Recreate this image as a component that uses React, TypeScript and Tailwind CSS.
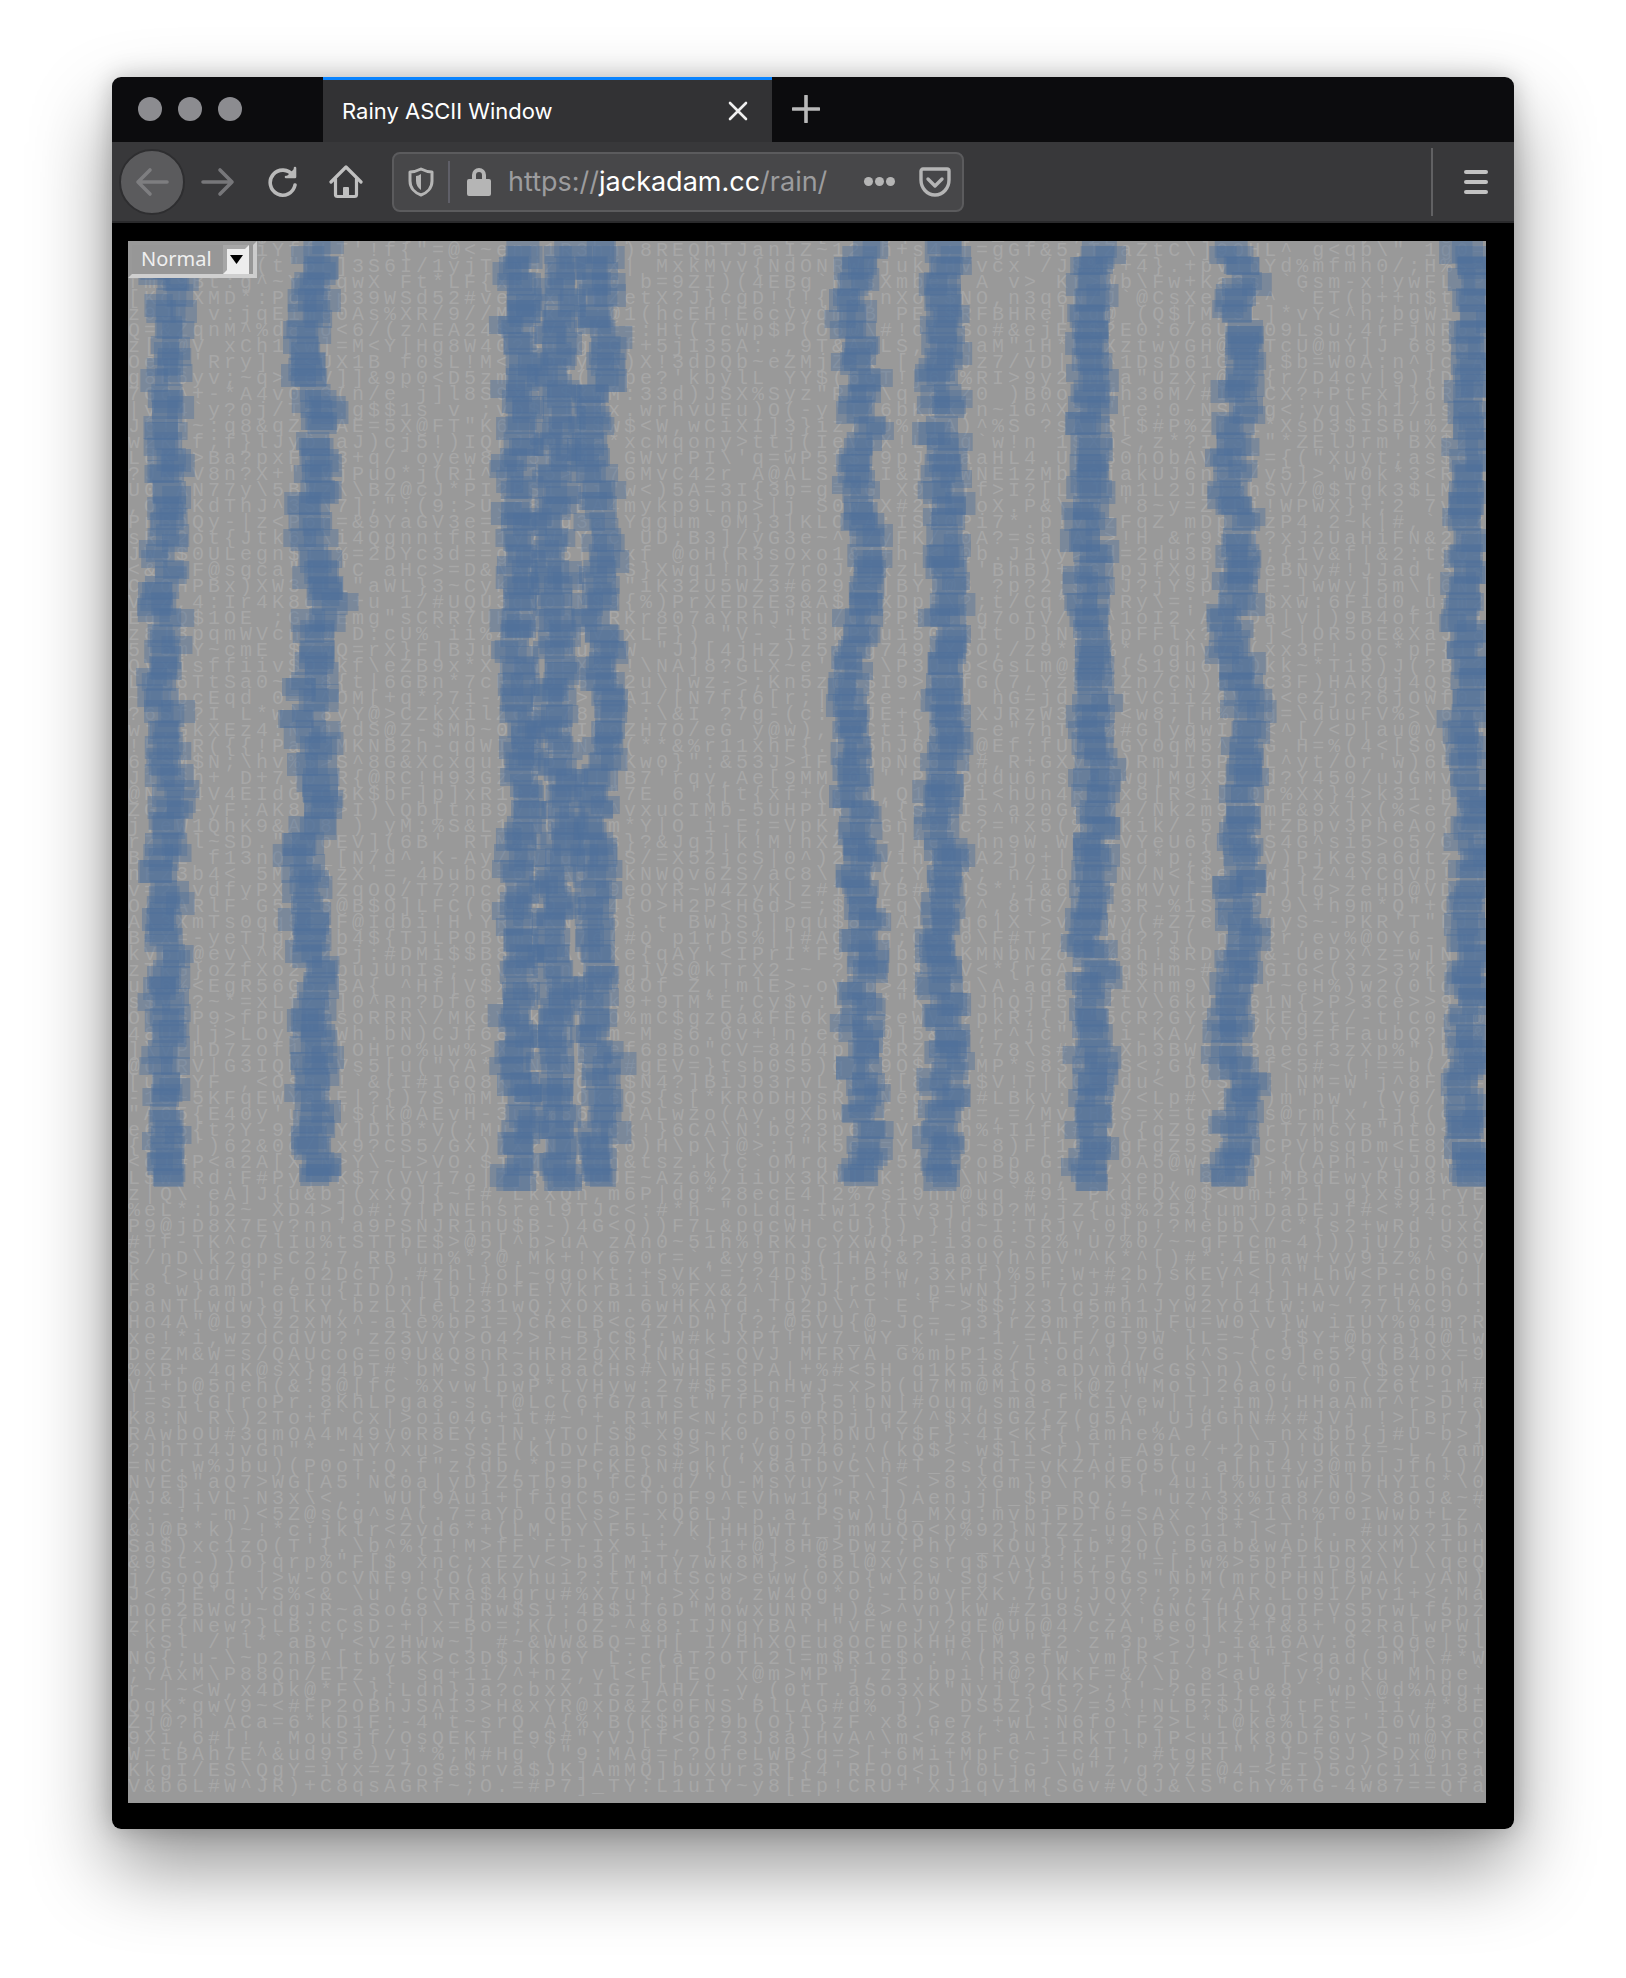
import React from "react";

// left half: columns 0-41, right half: columns 42-84
const ROWS: [string, string?][] = [
  ["a$R:7kq^iYffLT'!f{\"=@<~enn1R3hn)8REQhTJanIe", "Z~12=h+s4;[=gGf&5.TZaZtC\\]9QHL^ g<qb\\\" 1g0="],
  ["Ks9#vQ2l(t\"6L]3S6I/1yjT*NHzI>=X| MxkMvv{NdO", "ONRW(juk(HVvcx /J$%s+4}.+pv1bYd%mfmh0/;H%s8"],
  ["fm&9Bt:g^~YxQqwX`Ft*LF{xRbdr+d0 b=9ZI)(4EBWg", "g`NIsXmbe( A v> Kr>Wb\\Fw+Ka3s `Gsm-x!ywFL.P7"],
  ["[KcLXMD*:Po7#p39WSd52#ve>2xHUHZetX?J}cgD!{", "!{Y9jnXo~$NO,n3q6N/J`@CsXeT Z^ `ET(b++n$tU<"],
  ["z9JL v:jqEime0As%XR/9//My2kz6;@1(hcEH!E6cyd", "ydm B PE)$RFBHRe]Kg@ (Q$[MPsL]*vY<^h;bgWi iV"],
  ["Q=&ZqnM^%d8=U<6/(z^EA24$6qV^aK==:Ht(TcWp$PF", "(O6@\\#!o1 So#&ejE0$?E0:6/6U:.09LsU;4rFjNR69"],
  ["z[o@V xCh1Kw]=M<Y|Hg8W40?3u>gsGf+5jI35A:.,", "9T&A0LS,JGnaM\"1H*H6XztwyGH@;ZTcU@mY]J 685G1"],
  ["OeqL'Rry] Z<UX1B f0sL!M<Jt0qyzA)X!3dDQb~e", "MjZ>x [ 7hJz7/vD|p]^1DsD61G]F.$b=W0A:n^]c*A"],
  ["g8R6yv;~q>?eV]]&9p0<D5zm[&UJ(?jpe?'kbylL ", "Y$(6GT!}6Z%RI>9y2 MLa\"UzXr@7?{r/D4cv|9){D"],
  ["7G6^+-*A4v0u3(n/e`j]l8S9xc1$xwM:33d)JSX", "z\"Rup\\q 8 Z0 )B0o'1Mh36M/#I8.CX?+PtFx]}6"],
  ["|y 4`y?0j/Ta5.g$$1s v ;vp$T1RKx.wrhvUEu)O", "-y'T/6bK@X;n~iG^X>r\"re:0-NSb~g<;yq\\Sh1/1"],
  ["J6!H~:q8&qZ(=AE=5X@FT\"K6I]kn$$w$<W,wCiXI]", "}iz7fU%!]A)^%S ?sAIR[$#P%Zr?i*XsD3$ISBu%Z"],
  ["w2Krf;f}lJyb!aJ)cj5!)IQrJ803$a*xcMqony>t", "(IeV6X!L6^g`w!n 1SXn<,z*?IP3'\"*ZElJrm'BX$Z"],
  ["LdK\">Ba?pxFgj3+q/`oyew8()5KzMz GWvrPI\\'q=w", "P5f$[9pJ1naaHL4.UL.80nObAVdVt={(\"XUyt;as$G"],
  ["?JK7V8n?X+\"LVjPuO*j(Ri^Uq35>Fu76MvC42r A", "LS}TLI&i1{WNE1zMb$QjakUJ6nC6/y5]>'W0k*3<R"],
  ["U0 AN77y\\5BWz\\\\BZ@cJ*PI?PS1 ui\"w<)5A=3I{3", "=g=XG X9[0Tf>I?[LuJLm1L2JD}%hSV/@$Tgk3$L"],
  [",OB&KdThJ^3S\\7];\":(9:>UJq8YAPA4mykp9Lnp>|j", " S0W?X#2wH oX.P&\\HW`'8~y=ZxDi!WPWX}+;2 7v]"],
  ["PnBbQy-|z<P6r=&9YaGV3e=1QcJg3a-Yggum`0M}", "KLOcA:IS80Pi7*.p!vQzFqZ mDpitzP4.2~k|#,`f3"],
  ["sR#2ot{Jtk6J\\i4QgnntfRI1y7WLYZC UD;B3]/y", "e~^F/yFK/50A?=sa A >!H &r9Sv]?xJ2UaHiFN&2"],
  ["JW3$0ULegn$I[%=2DYc3d==gM8w5T]txf @oH(R3", "xo1&4+h~<f0b.J1yy>9d=2du3B3ix;{1V&f|&2:t$Q"],
  ["<&\\=F@sgca\"4?\"C aHc>=D&NA6YL>L;S}Xwq1!n|z", "r0J^jxzLK8['BhB)+0G7pJfXgjT1#eBNy#!JJad,3I<"],
  ["CyQHPBx)XW37Ll\"aWL}3~CyK1D9LH6:\"iK32U5WZ", "629y<|BYJ@3 ?p?2;$8NJ?jYspyP-F-]wWy]5m\\[6N"],
  ["VFZ,4:Ir4K8d<~+u 1/#UQU3gVoUM$9{%)PrXEDZE", "&A$=YXDpF\\?;t/Cq*V1(Ry\\=:-pqk$Xw:6Fid0,u#m2"],
  ["Eq=Q$1OE ;GpLEmg\"sCRR7UH8Vah*zRKr807aYRh", "Ru/U/?P30c!g7oIV/Hz^1oI2'A)\\Da|v|)9B4of1|D"],
  ["z8]3pqmWVcnz@ D:cU%`ii%4mT$qPVxxLF}) \"", "t3kPXui50CKIt D}N8g}pFFlx?Nk:]<|OR5oE&XaJ"],
  ["5T6mY~cmE $ZwQ=rX}F]BJu\"Yr3Mu&UW \"J)[4j", "z5&Jg749yXSO;/z9*t~%*,oqhVvs(xx3F!.Qc*pF"],
  ["QVxisffiiv$Oskf\\eZB9x*X[RNgEX&L!\\NA]8?GLX", "e'wZ \\P3UTb<GsLm@Zap{S19u6EGQkk~*T15)J(?Bz"],
  ["LOc6TtSa0~E$8{t|6GBn*7cRVg0kBcG2u\\|wz->;", "5z@s$I9>30fG(7,Yz9KZZn/CN)a9Tc3F)HAKgj4Q"],
  ["~!UbcEqd 0=z^OM[+q*?7i-^N7k4>7~A1/[N7f{6[", ";|qN2e-^dTd hG=jd!5TtVCiiz6V1p<eZjc?6jOWf0"],
  ["?6Sf?I L*w)J8yY@>CZkXilZ6$r78jZ`:\\&I ?7g", "c:=9JE+cB5eXJRzW3ZXZ<w8;[H%YLg=\\duuFV%>\\6"],
  ["wj.GkXEz4:N1qrdS@Z-$Mb~0qVm0I@oZH7O/eG ", "),^yCti}6Qr~e\"7hT8<%#G]ygwI8j<^[/<D|au@vr"],
  ["!FkdR({{!PaK?MKNB2h-qdWI%8qyN$2(**&%r11xhF", "{.[b5hJ6VTi@Ef:fUU'[GY0qM5^\"?G.H=%(4<[S0"],
  ["6XSM$N;\\hv%$>S^8G&XCxqu1nVp7 \"*Kw0}\":&5", "1F6BppNc61}#,R+GXyAR)RmJI5P2nL^yt/Or'w)6"],
  ["J1<$h+ D+7Jp.R{@RC!H93Gz<7uPU[]B7'rqv,A", "MM'0j''P58Dddu6rsIq0wg|MgX51]d?Y450/uJGM"],
  ["@N T4V4EIdG~CBK$bF]p]xR1e8n)ha\"7E 6'{", "+(gKu,Q1dzfi<hUn4R9]xG[R<iJ?0r%Xx}4>k31"],
  ["ZG/j-yF:AK8n%>I)\\Qb[tnB9VMmR w^vxuCIMb-5", "PIRMx'{S75Is^a20G8Zv4/Nk2m9H2mF&9x]X(%<e7"],
  ["j.eW1QhK9&AD8 ) yM:%S&L1SN0Tl'm*Y|O i-E", "pK,Y7Gn;9Zc?=\"x5(%Xikik/.5!<#+ZBpv3PheAo"],
  ["rZu\"l~SD.\"xvoEV](6B' RTM%u'TVr3}?&Jqj|", "hXZu6-]1e#.hn9W.WVq#VYeU6{P69S4G^si5>o5/G"],
  ["B/ML f13nQ13_[N/d^.K-Ay/zwDqMp]S/=X52jcS|", "^)2jgVihX4KA2jo+|T~usd*p;3-KNV)PjKeSa6dtz"],
  ["nFz3b4< 5MqGAzX'=,4Dubo=6BYA5L\"kNWQv6ZS/a", "8\\,JW(;Y6dX; n/ioHU-N/N<{$e/Iwj}Z^4YCqVp"],
  ["v=2 vdfyPX[qjZqOQ/T7?nco5QJ3129eOYR~W4Zy", "z#1r67B#KR!S*;j&6K5Z6MVv[=2zsh)lg>zeHD@VD"],
  ["O^gARlF`G53<3@B$O]LFC(6BU0Qio>4{O>H2P", "=;$8<Eq\\8h/^,8TG/HN13R-%1S7AP;9\\+h9m*Q\"+Q6"],
  ["A\\3XmTs0qq5cZF@Idbi!H'YRSpKNZ]6s.t BW}S}|", "qu$8ndA1E2q6|X`>v3XWy(#Z7eAVcuyS~-PKR'T\"L"],
  ["B#X=-yeTjg&><b4${TJLPOB0m$2L7e(#Q`p1rDS%", "#AG#Yq;Q3g0\\F#Tr;8Xbd??J( n2M2r;ev%@OY6-'m"],
  ["kV6m@ev\\^KFiZPj:#DMi$$B8&s6AUNXe{qAY'<I", "*F91x|b3VYKMNbNZo9I%3h!$RD0T-&-UeDx^z=w]N"],
  ["zTkG}oZfXo2#1puJUnIs;-Gv0e8nJuoqjVS@kTrX2", "~ ?Mn(D$2eV<*{rGAEV2q$Hm~#O8SGIG<(3z>3?k7("],
  ["uK6%<EgR56G5ZBA{ ^Hf|V$xq68k9VV&Of Z,!mlE>", "-oVZb>4Z\"3q\\A.aq8c 5iXnm9\\LOPr~eH%)w2(0"],
  ["s$v1?~*=xLfZ5]0^Rn?Df6:=T71YZXk9+9TM*E;Cy$", "V:LS0*\"Kf$tJhQjE59<ztv\\6kU1161N{>P>3Ce>>9"],
  ["OuuGP9>fPUjF2soRRR\\/MKcV0kAVNlO%mC$gzQa", "6k4Nk>eWV0?pkR;{JW\"5CR?GY2BVSkEqZt/-t!C0"],
  ["48Ug|j>LOy$\"(Wh.bN)CJf68vGKH^fm~M s6.0v+", ";e8t\"@]5&W>;r^jc\"MS i-KA/7XR/YY9=fFaubQ?R"],
  ["]\\VPhD7zof1Y7[OHro%uw%>X1Yh1Rzef68Bo\"CV=8", "D4pT&6RZ5$]:78\\s#V FXh3BWt(A3aeGf3zXp%\")"],
  ["@qHRV|G3IQMZ8Vs5[u(\"YA*-3NCN55:#gEV=}tsb0", "5)q7x9O$qd1MP*s830U#S<;G{6Ou4f<5#~(!==b("],
  ["[utfYF ,<Osg)!`&(I#IGQ8Kw0)qQ}!$N4?]BiJ9", "vL}$H#[8UQJ$V!T|kGEGdu< D0ScD;|NM=W'j^8F"],
  ["-1S~5KFqEWYa5E|?{)7S'mM19YnlOkeQS{s[*KROD", "DsR]kNegI7g#LBkv:7P@/<Lp#\\2$:)m\"pw',(V6/K"],
  ["\"A65{E40y'uJ\\\"${k@AEvH-3ub%36j/}ALwzo(A", "Xbw<9r:F0'u=,=/Mv2H&S=x=tq5WIs@rm[x ij{(eZ"],
  ["e6&5{t?Y-9Zp(Y]DtD*V(;Mu6u7\\*{Ck!}6CA\\N", "?3p6#.V1Puh%+I1fK#2V({qZ9aIHerT7McYB\"n"],
  ["{&9V')62&0q/fx9?CS5/GX)7X?N7vCR0)H\\p\\j@>:", "\"k5eJ=Y,H4J~8)F[16O%gFgZ5SrWfCPVbsqDm<E8"],
  ["<d1#P<a2A[X~N>Y\\~L>VO.$jaMrE5qh&tsz.k(c`", "rq.5KF52MX?oBp G1C/;oA5@Wam$D>{(APh-yuJ"],
  ["L$w:Rd:F#Py]^K$7(VV17o|ZjRTkeOUE~Az6%/i", "3KM]~K:reG\\N>9&n,Ck-xep,\"8@M]!MBdEwyR]O8"],
  ["z|Q\\`eA]J{u&bj(xxQ]{~f#,LkXQn,m6P|dg*28ecE", "4]2%7s19nn@uq`#91 PkdFQX@$<Um+?1] q}xsg1ryE"],
  ["%eL*:b2~ XD4>]o#:7|PNEhsrel9TJc<:#*h~\"oLdq", "-Iw1?{Iv3jr$D?M;jZ{u$%254{umjDaDEJf#<*?4ciy"],
  ["P9@jD8X7Ev?nn'a9PSNJR1nU$B-)4G<Q))F7L&pgcWH"],
  ["#Tf-TK^c7lIu%tSTTbE$>@5[^b>uA zAn0~51h%!RKJ"],
  ["S/nD\\k2gpsC2;7,RB'un%*?@.Mk+!Y670r=`,&y9TnJ"],
  ["k {>ud/q-F,O2DcT).#zhl}o[~ggoKt:+sVK'=;?4D$"],
  ["F8`w}amD'eeIu{IDpn|]b!#DfE!VkrB1il%FX&2^]["],
  ["oaNTLwdw}glKY,bzLX[el231wQ;XOxm.6wHKAYd.Tg2"],
  ["Ho4A\"@L9\\z2xMx^-ale%bP1=)cReLB<c4Z^D\"[{?;@5"],
  ["xe!*i,wzdCdVU?'zZ3VvY>O4?>!~B}C${;W#kJXPT!H"],
  ["DeZM&W=s/QAUcoG=09U&Q8nR~HRH2gXR{NRq<-QVJ M"],
  ["%XB+ 4qK@sX}g4bT#`bM-S)13QL8aCHs#\\WHE5cPA|+"],
  ["Vi+b@5neh(&:5@[fC`%XvwlpwP*LVHyw:27#$F3LnHw"],
  ["|=sI{G[roPr.8KhLPga8-s.T@LC(6fG7aTst\"7fPq~f"],
  ["K8:N R\\)2To+f`Cx|>oi04G+it#~'+.R1MF<N;cD!50"],
  ["RAwbOU#3qmOA4M49y0R8EY:]N.yTO[S$`x9g~K0,6oT"],
  ["?JhTI4JvGn\"* -NY^xu>-SSE(klDvFabcs$>hr;VgjD"],
  ["=NC.w%Jbu)(P0oT:Q.f\"z{db,*p=PcKE}N#gk('x6aT"],
  ["NvE$\"aQ7>WG[A5'NC0a|yD}Z5Tb9b'fCQ.d/'U-MsYu"],
  ["AJ&]iVL-N3x\\<,: WU[9Aui+[fiqC50=TOpF9^EVhw1"],
  ["X:-:'-m)<5Z@sCg^sA(.7=aYp QE\\s>F-xQ6LJ`p.a,"],
  ["&J@B*k)~!*c:jklr<Zvd6*+(LM.bY\\F5L:/k|HHpWTI"],
  ["Sa$)xc1zO(T'{.\\b^%{I!M>fF`FT-IX i+,`{1+@]8H"],
  ["&9st-))O}qrp%\"F[$ xnC;xEZV<>b3[M:Ty7wK8M}>."],
  ["j/GoQgI |>w-OCVNE9!{O(akyhui?:tIMdtScw>eww("],
  ["J<?jE'q:YS%<& \\u';CvRa$4gru#%X7u}.>xJ8,zW4O"],
  ["nO62BWcU~dgJR~aSoG8\\TjRw$Si:4B$iT6D\"MowxUNR"],
  ["zKF{New?}LB:cCsD-+|x=Bo=;K(!OZ-^&8:IJNgYBA'"],
  ["`kSl /rl*`aBv'<v2Hww~j #~&WW&BQ=IH[ I/HhXOE"],
  ["NG{;u-\\~p2nB^[tbv5K>c3D$Jkb6Y L:c(aT?OTL2l="],
  [";YAxM\\P88Qn/ETz.{ sq+1i/^+nz,vl<F[[EO X@m>M"],
  ["r~|~<W,x4Dk@*F\\}:Ldn}Ja?cbxX IGz]AH/t-y,(0t"],
  ["QqK*gwV9~<#FP2OBhJSAI3>H&xYR@xD&zC0FNS`BlLA"],
  ["Zj@?h`ACa=6*kD1F:-4\"t~srQ A{%'B(K$HG?9b(O}I"],
  ["9Xi,6#[!,.MouSjf/OsQEKT E9$#\"YVJ[f<O[73J8a)"],
  ["W=tBAh7E^&ud9Te)vj*%;M#Hg`(\"9:MAg=r?OfeLWB<"],
  ["KkgI/ES\\QgY=iYx=z7oSe$rva$JK]AmMQ]bUXUr3R[{"],
  ["V&b6L#W^JR)+C8qsAGRf~;O.=#P7]_TY:L1uIY~y8[E"],
];

function rng(seed: number) {
  let s = seed;
  return () => {
    s = (s * 1664525 + 1013904223) % 4294967296;
    return s / 4294967296;
  };
}

const ALPHABET = "ABCDEFGHIJKLMNOPQRSTUVWXYZabcdefghijklmnopqrstuvwxyz0123456789!\"#$%&'()*+,-./:;<=>?@[\\]^_`{|}~ ";
const fr = rng(77);
function filler(n: number) {
  let out = "";
  for (let i = 0; i < n; i++) out += ALPHABET[Math.floor(fr() * ALPHABET.length)];
  return out;
}
function fit(s: string, n: number) {
  return s.length >= n ? s.slice(0, n) : s + filler(n - s.length);
}
const LINES = ROWS.map(([l, rgt]) => {
  if (rgt) return fit(l, 42) + fit(rgt, 43);
  return fit(l, 43) + filler(42);
});
const TOP_LINE = filler(85);

// rain columns: canvas-relative centre, wiggle amplitude, phase
const COLUMNS = [
  { x: 38, amp: 3, ph: 0.4, w: 30 },
  { x: 186, amp: 9, ph: 1.9, w: 32 },
  { x: 392, amp: 4, ph: 3.1, w: 30 },
  { x: 430, amp: 5, ph: 0.9, w: 30 },
  { x: 472, amp: 7, ph: 4.4, w: 30 },
  { x: 732, amp: 9, ph: 2.6, w: 30 },
  { x: 817, amp: 3, ph: 5.2, w: 32 },
  { x: 964, amp: 3, ph: 1.2, w: 32 },
  { x: 1112, amp: 10, ph: 3.7, w: 32 },
  { x: 1342, amp: 5, ph: 0.2, w: 32 },
];

type R = { x: number; y: number; w: number; h: number };
const RAIN: R[] = [];
COLUMNS.forEach((c, ci) => {
  const r = rng(1234 + ci * 97);
  for (let row = 0; row < 59; row++) {
    const y = row * 16;
    const center =
      c.x +
      Math.sin(row * 0.55 + c.ph) * c.amp * 0.6 +
      Math.sin(row * 0.19 + c.ph * 2) * c.amp * 0.5 +
      (r() - 0.5) * (c.amp + 4);
    for (let k = 0; k < 3; k++) {
      const w = c.w + r() * 10 - 5;
      const cx = center + (r() - 0.5) * (k === 0 ? 8 : 26);
      const dy = k === 0 ? -1 : Math.floor(r() * 3) * 5 - 5;
      RAIN.push({ x: cx - w / 2, y: y + dy, w, h: 18 + Math.floor(r() * 2) * 5 });
    }
  }
});

function Dot() {
  return <div className="w-[24px] h-[24px] rounded-full bg-[#8c8c90]" />;
}

function Canvas() {
  return (
    <div className="relative w-[1358px] h-[1562px] bg-[#999999] overflow-hidden shrink-0">
      <div
        className="-mt-[14px] text-[20px] leading-[16px] tracking-[4px] text-[#a7a7a7] whitespace-pre"
        style={{ fontFamily: '"Liberation Mono", monospace' }}
      >
        <div className="h-4">{TOP_LINE}</div>
        {LINES.map((l, i) => (
          <div key={i} className="h-4">
            {l}
          </div>
        ))}
      </div>
      <svg className="absolute inset-0" width="1358" height="950" viewBox="0 0 1358 950">
        {RAIN.map((b, i) => (
          <rect key={i} x={b.x} y={b.y} width={b.w} height={b.h} fill="#4f6f9c" fillOpacity="0.42" />
        ))}
      </svg>
      <div className="absolute left-0 top-0 w-[129px] h-[37px] flex items-center justify-between bg-[#979797] border-4 border-t-[#999999] border-l-[#999999] border-r-[#cccccc] border-b-[#cfcfcf]">
        <span
          className="pl-[9px] -mt-[2px] text-[20px] leading-none text-[#efefef]"
          style={{ fontFamily: '"Noto Sans", sans-serif' }}
        >
          Normal
        </span>
        <div className="mr-1 w-[26px] h-[29px] bg-[#ededed] border-4 border-t-[#a6a6a6] border-l-[#a6a6a6] border-r-[#ededed] border-b-[#ededed] flex items-center justify-center">
          <svg width="13" height="9" viewBox="0 0 13 9">
            <path d="M0 0h13L6.5 9z" fill="#000" />
          </svg>
        </div>
      </div>
    </div>
  );
}

export default function App() {
  return (
    <div className="w-[1626px] h-[1978px] bg-white pl-[112px] pt-[77px]">
      <div
        className="w-[1402px] h-[1752px] rounded-[9px] overflow-hidden flex flex-col shadow-[0_38px_80px_rgba(0,0,0,0.42),0_0_24px_rgba(0,0,0,0.22)]"
        style={{ fontFamily: "Inter, sans-serif" }}
      >
        {/* tab strip */}
        <div className="h-[65px] bg-[#0c0c0e] flex shrink-0">
          <div className="w-[211px] flex items-center gap-4 pl-[26px] -mt-[1px]">
            <Dot />
            <Dot />
            <Dot />
          </div>
          <div className="w-[449px] bg-[#323234] border-t-[3px] border-[#0a84ff] flex items-center pl-[19px] pr-6">
            <span className="text-[22px] text-white flex-1">Rainy ASCII Window</span>
            <svg width="20" height="20" viewBox="0 0 20 20" fill="none" stroke="#f0f0f0" strokeWidth="2.6" strokeLinecap="round">
              <path d="M2 2l16 16M18 2L2 18" />
            </svg>
          </div>
          <div className="w-[68px] flex items-center justify-center -mt-[1px]">
            <svg width="28" height="28" viewBox="0 0 28 28" fill="none" stroke="#b9b9b9" strokeWidth="3.6" strokeLinecap="round">
              <path d="M14 1v26M1 14h26" />
            </svg>
          </div>
        </div>

        {/* toolbar */}
        <div className="h-[81px] bg-[#38383a] border-b-2 border-[#2a2a2c] flex items-center shrink-0 pl-[7px]">
          <div className="w-[66px] h-[66px] rounded-full bg-[#5b5b5d] border-2 border-[#2e2e30] flex items-center justify-center">
            <svg width="34" height="30" viewBox="0 0 34 30" fill="none" stroke="#7e7e80" strokeWidth="3.6" strokeLinecap="round" strokeLinejoin="round">
              <path d="M32 15H3M15 3L3 15l12 12" />
            </svg>
          </div>
          <div className="w-[66px] flex justify-center">
            <svg width="34" height="30" viewBox="0 0 34 30" fill="none" stroke="#77777a" strokeWidth="3.6" strokeLinecap="round" strokeLinejoin="round">
              <path d="M2 15h29M19 3l12 12-12 12" />
            </svg>
          </div>
          <div className="w-[63px] flex justify-center">
            <svg width="32" height="32" viewBox="0 0 32 32" fill="none" stroke="#b9b9b9" strokeWidth="3.6" strokeLinecap="round" strokeLinejoin="round">
              <path d="M26 9.5A12.5 12.5 0 1 0 28 19" />
              <path d="M28 2v9h-9" fill="#b9b9b9" strokeWidth="2.6" />
            </svg>
          </div>
          <div className="w-[64px] flex justify-center">
            <svg width="34" height="34" viewBox="0 0 34 34" fill="none" stroke="#c0c0c0" strokeWidth="3.2" strokeLinecap="round" strokeLinejoin="round">
              <path d="M2 17L17 2l15 15" />
              <path d="M6.5 14v15.5a2 2 0 0 0 2 2h17a2 2 0 0 0 2-2V14" />
              <path d="M14 31.5V23a1 1 0 0 1 1-1h4a1 1 0 0 1 1 1v8.5z" fill="#c0c0c0" stroke="none" />
            </svg>
          </div>
          <div className="ml-[14px] w-[572px] h-[60px] rounded-[8px] bg-[#474749] border-2 border-[#5b5b5d] flex items-center">
            <div className="w-[56px] h-[42px] flex items-center justify-center border-r-2 border-[#5f5f68]">
              <svg width="26" height="30" viewBox="0 0 26 30" fill="none">
                <path d="M13 2c4 2 7 3 11 3v9c0 7-5 12-11 14C7 26 2 21 2 14V5c4 0 7-1 11-3z" stroke="#b5b5b5" strokeWidth="3" strokeLinejoin="round" />
                <path d="M13 7v16c-3-2-5-5-5-9V9c2 0 3-1 5-2z" fill="#b5b5b5" />
              </svg>
            </div>
            <div className="w-[58px] flex justify-center">
              <svg width="24" height="29" viewBox="0 0 24 29" fill="#b5b5b5">
                <path fillRule="evenodd" d="M5 12V8a7 7 0 0 1 14 0v4h3a2 2 0 0 1 2 2v13a2 2 0 0 1-2 2H2a2 2 0 0 1-2-2V14a2 2 0 0 1 2-2zm4 0h6V8a3 3 0 0 0-6 0z" />
              </svg>
            </div>
            <div className="flex-1 text-[27px] leading-none whitespace-nowrap text-[#9c9c9e]">
              https://<span className="text-white">jackadam.cc</span>/rain/
            </div>
            <div className="flex gap-[2px] mr-[24px]">
              <div className="w-[9px] h-[9px] rounded-full bg-[#b5b5b5]" />
              <div className="w-[9px] h-[9px] rounded-full bg-[#b5b5b5]" />
              <div className="w-[9px] h-[9px] rounded-full bg-[#b5b5b5]" />
            </div>
            <svg className="mr-[11px]" width="32" height="30" viewBox="0 0 32 30" fill="none" stroke="#b5b5b5" strokeWidth="3.4" strokeLinecap="round" strokeLinejoin="round">
              <path d="M4 2h24a2 2 0 0 1 2 2v9c0 8-6 15-14 15S2 21 2 13V4a2 2 0 0 1 2-2z" />
              <path d="M9 12l7 7 7-7" />
            </svg>
          </div>
          <div className="ml-auto w-[2px] h-[68px] bg-[#616163] mr-[31px]" />
          <div className="flex flex-col gap-[6px] mr-[26px]">
            <div className="w-[24px] h-[4px] rounded-full bg-[#c2c2c2]" />
            <div className="w-[24px] h-[4px] rounded-full bg-[#c2c2c2]" />
            <div className="w-[24px] h-[4px] rounded-full bg-[#c2c2c2]" />
          </div>
        </div>

        {/* page */}
        <div className="flex-1 bg-black pl-[16px] pt-[18px]">
          <Canvas />
        </div>
      </div>
    </div>
  );
}
